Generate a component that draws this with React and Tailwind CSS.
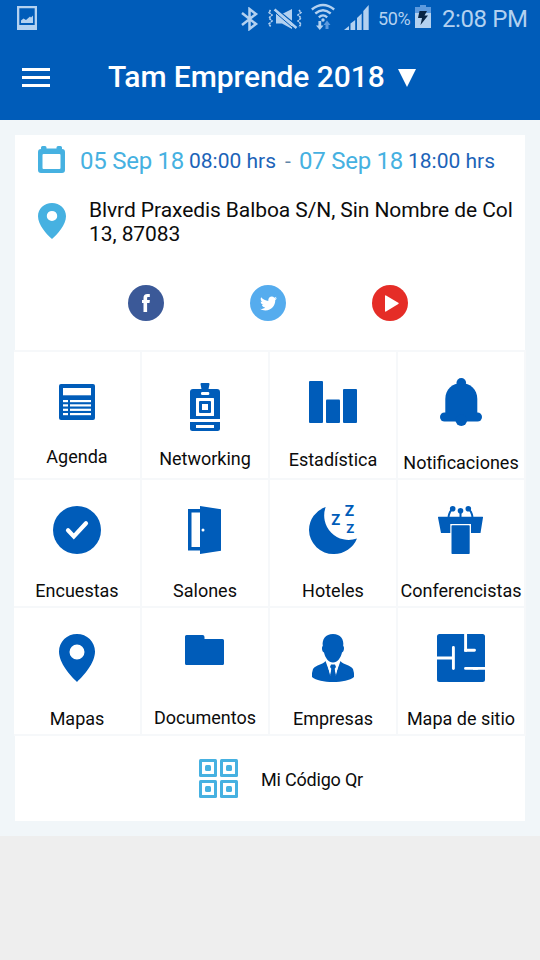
import { FaTwitter } from 'react-icons/fa';

const Pin = ({ className }) => (
  <svg viewBox="0 0 36 48" preserveAspectRatio="none" className={className} fill="currentColor" fillRule="evenodd">
    <path d="M18 0C8 0 0 7.8 0 17.6C0 29 11 41.5 18 48C25 41.5 36 29 36 17.6C36 7.8 28 0 18 0ZM18 10.5A6.7 6.7 0 1 1 18 23.9A6.7 6.7 0 1 1 18 10.5Z" />
  </svg>
);

const AgendaIcon = () => (
  <>
    <rect x="6" width="36" height="36" rx="2" fill="currentColor" />
    <g fill="#fff">
      <rect x="10" y="4" width="28" height="7.3" />
      {[16, 20.3, 24.7, 29].map((y) => (
        <g key={y}>
          <rect x="10" y={y} width="5" height="2.2" />
          <rect x="17" y={y} width="21" height="2.2" />
        </g>
      ))}
    </g>
  </>
);

const BadgeIcon = () => (
  <>
    <g fill="currentColor">
      <path d="M20.5 0H27.5Q28.5 0 28.5 1L27.5 6.5H20.5L19.5 1Q19.5 0 20.5 0Z" />
      <path d="M12 6H36Q39 6 39 9V36H9V9Q9 6 12 6ZM9 39H39V45.5Q39 48 36.5 48H11.5Q9 48 9 45.5Z" />
    </g>
    <rect x="20" y="9" width="8.3" height="3" rx="1.2" fill="#fff" />
    <rect x="15" y="15" width="18" height="18" rx="0.5" fill="#fff" />
    <rect x="18" y="18" width="12" height="12" rx="1" fill="currentColor" />
    <rect x="21" y="21" width="6" height="6" fill="#fff" />
    <rect x="15" y="42" width="18" height="3" fill="#fff" />
  </>
);

const BarsIcon = () => (
  <g fill="currentColor">
    <rect width="14" height="42" rx="1" />
    <rect x="17" y="18.5" width="14" height="23.5" rx="1" />
    <rect x="34" y="8" width="14" height="34" rx="1" />
  </g>
);

const BellIcon = () => (
  <g fill="currentColor">
    <circle cx="24.3" cy="4.8" r="4.8" />
    <path d="M8.3 36V21C8.3 11.5 15.3 5 24.3 5S40.3 11.5 40.3 21V36Z" />
    <rect x="3" y="34.5" width="42" height="9" rx="4.5" />
    <circle cx="24.3" cy="42.2" r="5.8" />
  </g>
);

const CheckIcon = () => (
  <>
    <circle cx="24" cy="24" r="24" fill="currentColor" />
    <path d="M15 24.3L20.8 30.5L33 17.3" fill="none" stroke="#fff" strokeWidth="4.2" strokeLinecap="round" />
  </>
);

const DoorIcon = () => (
  <>
    <path d="M7 3H19V6.5H10.5V41H19V44.5H7Z" fill="currentColor" />
    <path d="M19 0L40 3.3V44.7L19 48Z" fill="currentColor" />
    <circle cx="22" cy="24" r="1.5" fill="#fff" />
  </>
);

const MoonIcon = () => (
  <g fill="currentColor">
    <path d="M16.7 1A24.4 24.4 0 0 0 0 24A24.3 24.3 0 0 0 25 48A24.8 24.8 0 0 0 48 32.5A24.5 24.5 0 0 1 16.7 1Z" />
    <g fontFamily="Roboto, sans-serif" fontWeight="700">
      <text x="22.3" y="19.3" fontSize="14.5" textLength="9" lengthAdjust="spacingAndGlyphs">Z</text>
      <text x="35.8" y="10.2" fontSize="14.5" textLength="9.4" lengthAdjust="spacingAndGlyphs">Z</text>
      <text x="37.3" y="26.8" fontSize="12.5" textLength="8" lengthAdjust="spacingAndGlyphs">Z</text>
    </g>
  </g>
);

const PodiumIcon = () => (
  <>
    <path d="M1.5 10.7H45.5Q46.2 10.7 46 11.5L43.5 27H4L1 11.5Q.9 10.7 1.5 10.7Z" fill="currentColor" />
    <path d="M13.3 28V18H34V28Z" fill="#fff" />
    <rect x="14.5" y="19.2" width="18.2" height="28.8" rx="0.8" fill="currentColor" />
    <g fill="currentColor">
      <circle cx="15.7" cy="2.8" r="2.8" />
      <circle cx="23.5" cy="4.8" r="2.8" />
      <circle cx="31.3" cy="2.8" r="2.8" />
    </g>
    <path d="M15.5 3Q12.5 5 11.5 11M23.5 5V11M31.5 3Q34.5 5 35.5 11" fill="none" stroke="currentColor" strokeWidth="2" />
  </>
);

const MapPinIcon = () => (
  <path
    fill="currentColor"
    fillRule="evenodd"
    d="M24 0C14 0 6 7.8 6 17.6C6 29 17 41.5 24 48C31 41.5 42 29 42 17.6C42 7.8 34 0 24 0ZM24 10.5A7.5 7.5 0 1 1 24 25.5A7.5 7.5 0 1 1 24 10.5Z"
  />
);

const FolderIcon = () => (
  <path d="M5.5 0H21.5Q23.5 0 23.5 2V4H41.5Q43 4 43 5.5V28.5Q43 30 41.5 30H5.5Q4 30 4 28.5V1.5Q4 0 5.5 0Z" fill="currentColor" />
);

const BusinessIcon = () => (
  <g fill="currentColor">
    <path d="M24 0C16.5 0 12.8 5.5 13.8 12C12.3 13 13 18 15 18.5C16 23.5 19.5 28.5 24 28.5S32 23.5 33 18.5C35 18 35.7 13 34.2 12C35.2 5.5 31.5 0 24 0Z" />
    <path d="M16.5 27L22 42L21.5 33H26.5L26 42L31.5 27C34 31 41 30.5 44 35Q45.2 38 45 43C41 46.5 33 48 24 48S7 46.5 3 43Q2.8 38 4 35C7 30.5 14 31 16.5 27Z" />
    <path d="M18 28.5L23 33L21 41Z M30 28.5L25 33L27 41Z" fill="#fff" />
    <path d="M22 30.5H26L27 33L25.5 35L26.8 41L24 44L21.2 41L22.5 35L21 33Z" />
  </g>
);

const SiteMapIcon = () => (
  <>
    <rect width="48" height="48" rx="2.5" fill="currentColor" />
    <g fill="none" stroke="#fff" strokeWidth="2.9">
      <path d="M16.4 13.5V34.5M28.6 16.3H37.5M28.5 34.4H40" strokeLinecap="round" />
      <path d="M0 24H16M28.6 0V17.7M36 34.4H48" />
    </g>
  </>
);

const menu = [
  { label: 'Agenda', icon: AgendaIcon, iconPos: 'mt-8', labelPos: 'mt-[14px]' },
  { label: 'Networking', icon: BadgeIcon, iconPos: 'mt-[31px]', labelPos: 'mt-[17px]' },
  { label: 'Estadística', icon: BarsIcon, iconPos: 'mt-[29px]', labelPos: 'mt-5' },
  { label: 'Notificaciones', icon: BellIcon, iconPos: 'mt-[26px]', labelPos: 'mt-[26px]' },
  { label: 'Encuestas', icon: CheckIcon, iconPos: 'mt-[26px]', labelPos: 'mt-[26px]' },
  { label: 'Salones', icon: DoorIcon, iconPos: 'mt-[26px]', labelPos: 'mt-[26px]' },
  { label: 'Hoteles', icon: MoonIcon, iconPos: 'mt-[26px]', labelPos: 'mt-[26px]' },
  { label: 'Conferencistas', icon: PodiumIcon, iconPos: 'mt-[26px]', labelPos: 'mt-[26px]' },
  { label: 'Mapas', icon: MapPinIcon, iconPos: 'mt-[26px]', labelPos: 'mt-[26px]' },
  { label: 'Documentos', icon: FolderIcon, iconPos: 'mt-[27px]', labelPos: 'mt-6' },
  { label: 'Empresas', icon: BusinessIcon, iconPos: 'mt-[26px]', labelPos: 'mt-[26px]' },
  { label: 'Mapa de sitio', icon: SiteMapIcon, iconPos: 'mt-[26px]', labelPos: 'mt-[26px]' },
];

const MenuTile = ({ label, icon: Icon, iconPos, labelPos }) => (
  <button className="h-[126px] bg-white flex flex-col items-center overflow-hidden">
    <svg width="48" height="48" viewBox="0 0 48 48" className={`shrink-0 overflow-visible text-[#005cb9] ${iconPos}`}>
      <Icon />
    </svg>
    <span className={`text-lg leading-[22px] whitespace-nowrap text-[#0c0c0c] ${labelPos}`}>{label}</span>
  </button>
);

const StatusBar = () => (
  <div className="h-9 flex items-start text-[#b3d1f0]">
    <svg width="20" height="24" viewBox="0 0 20 24" className="ml-[17px] mt-1.5" fill="currentColor">
      <path fillRule="evenodd" d="M0 0H20V24H0ZM2.3 2.3V19H17.7V2.3Z" />
      <path d="M4 17V14.5L6.5 12.5L9 14L13 10.5L14 11.5L16 9.5V17Z" />
    </svg>

    {/* Bluetooth */}
    <svg width="18" height="24" viewBox="0 0 18 24" className="ml-[204px] mt-[7px]" fill="none" stroke="currentColor" strokeWidth="2.5">
      <path d="M1 6L15 17L8.5 22V2L15 7L1 18" />
    </svg>

    {/* Vibrate / muted */}
    <svg width="34" height="22" viewBox="0 0 34 22" className="ml-[9px] mt-2" fill="none" stroke="currentColor">
      <path d="M2.5 2L1 4.5L4 7L1 10L4 13L1 16L3 19M31 2L33 4.5L30 7L33 10L30 13L33 16L31 19" strokeWidth="1.6" strokeDasharray="2.2 .7" />
      <path d="M8 5.5V15.5H14L24 21V1L15 5.5Z" fill="currentColor" stroke="none" />
      <path d="M7 0L30 18.5" stroke="#005cb9" strokeWidth="1.5" />
      <path d="M6.5 1.5L28.5 20" strokeWidth="2.6" />
      <path d="M6 3.5L27.5 22" stroke="#005cb9" strokeWidth="1" />
    </svg>

    {/* Wifi */}
    <svg width="24" height="27" viewBox="0 0 24 27" className="ml-[9px] mt-[3px]" fill="none" stroke="currentColor" strokeWidth="2.3">
      <path d="M.8 6.5Q12-2.5 23.2 6.5M4.3 10.5Q12 4 19.7 10.5M7.8 14.3Q12 10.5 16.2 14.3" />
      <circle cx="12" cy="17" r="1.7" fill="currentColor" stroke="none" />
      <path d="M7.4 18H10.2V22.5H12.5L8.8 27L5 22.5H7.4Z" fill="currentColor" stroke="none" />
      <path d="M14.5 26V22H12.5L16 17.5L19.5 22H17.5V26Z" fill="#5d9ade" stroke="none" />
    </svg>

    {/* Signal */}
    <svg width="26" height="25" viewBox="0 0 26 25" className="ml-[9px] mt-[5px]" fill="currentColor">
      <path d="M0 25L5 21V25ZM6.5 18.5L11.2 15V25H6.5ZM13 13L17.7 8.5V25H13ZM19.3 6L24.7 0V25H19.3Z" />
    </svg>

    <span className="ml-2 mt-2 w-[34px] text-lg leading-[22px] tracking-[-0.4px]">50%</span>

    {/* Battery */}
    <svg width="16" height="23" viewBox="0 0 16 23" className="ml-[3px] mt-[5px]">
      <path d="M5 0H11V2H16V9H0V2H5Z" fill="#5d9ade" />
      <path d="M0 8H16V23H0Z" fill="currentColor" />
      <path d="M4.5 6H12L9.5 10.5H13L5.5 20L7 13H3Z" fill="#082545" />
    </svg>

    <span className="ml-[11px] mt-[5px] text-2xl leading-7 tracking-[-0.4px] whitespace-nowrap">2:08 PM</span>
  </div>
);

const Header = () => (
  <header className="h-[120px] bg-[#005cb9]">
    <StatusBar />
    <div className="h-[84px] flex items-start text-white">
      <button className="ml-[22px] mt-8 w-7 flex flex-col gap-[5px]">
        <span className="h-[3px] w-full bg-white" />
        <span className="h-[3px] w-full bg-white" />
        <span className="h-[3px] w-full bg-white" />
      </button>
      <h1 className="ml-[58px] mt-[23px] text-[30px] leading-9 font-medium tracking-[-0.06px] whitespace-nowrap">Tam Emprende 2018</h1>
      <svg width="18" height="18" viewBox="0 0 18 18" className="ml-[13px] mt-[33px]" fill="#fff">
        <path d="M0 0H18L9 18Z" />
      </svg>
    </div>
  </header>
);

const EventInfo = () => (
  <section className="mx-px h-[215px] bg-white">
    <div className="h-[38px] flex items-start pt-[11px] pl-[23px] whitespace-nowrap">
      <svg width="27" height="27" viewBox="0 0 27 27" className="text-[#46b1e1]" fill="currentColor">
        <path fillRule="evenodd" d="M3 3V1.5Q3 0 4.5 0H7Q8.5 0 8.5 1.5V2.5H18.5V1.5Q18.5 0 20 0H22.5Q24 0 24 1.5V3Q27 3 27 6V24Q27 27 24 27H3Q0 27 0 24V6Q0 3 3 3ZM5.5 8Q4.5 8 4.5 9V22Q4.5 23 5.5 23H21.5Q22.5 23 22.5 22V9Q22.5 8 21.5 8Z" />
      </svg>
      <div className="ml-[15px] mt-px flex items-start text-[#1c63b8]">
        <span className="w-[109px] text-2xl leading-7 tracking-[-0.25px] text-[#46b1e1]">05 Sep 18</span>
        <span className="w-24 text-[21px] leading-7">08:00 hrs</span>
        <span className="w-[14px] text-[21px] leading-7 text-[#5f86a8]">-</span>
        <span className="w-[109px] text-2xl leading-7 tracking-[-0.25px] text-[#46b1e1]">07 Sep 18</span>
        <span className="text-[21px] leading-7">18:00 hrs</span>
      </div>
    </div>

    <div className="mt-6 flex items-start pl-[23px]">
      <Pin className="mt-[6px] h-9 w-7 text-[#46b1e1]" />
      <p className="mt-px ml-[23px] text-[21px] leading-6 tracking-[-0.08px] text-[#0c0c0c] whitespace-nowrap">
        Blvrd Praxedis Balboa S/N, Sin Nombre de Col
        <br />
        13, 87083
      </p>
    </div>

    {/* Social links */}
    <div className="mt-[39px] pl-[113px] flex gap-[86px] text-white">
      <div className="size-9 rounded-full bg-[#3b5998] flex items-center justify-center">
        <svg width="8" height="18" viewBox="0 0 8 18" fill="currentColor">
          <path d="M1.5 18V9H0V6H1.5V4C1.5 1.3 2.8 0 5.3 0H7.8V3H6.2C5.4 3 5.1 3.3 5.1 4.1V6H7.9L7.5 9H5.1V18Z" />
        </svg>
      </div>
      <div className="size-9 rounded-full bg-[#55acee] flex items-center justify-center">
        <FaTwitter size={17} />
      </div>
      <div className="size-9 rounded-full bg-[#e52d27] flex items-center justify-center">
        <svg width="14" height="17" viewBox="0 0 14 17" className="ml-[3px]" fill="#fff">
          <path d="M0 1Q0 0 1 .5L13.3 7.7Q14.2 8.3 13.3 9L1 16.5Q0 17 0 16Z" />
        </svg>
      </div>
    </div>
  </section>
);

const QrIcon = () => (
  <svg width="39" height="39" viewBox="0 0 39 39" fill="#46b1e1">
    {[[0, 0], [21, 0], [0, 21], [21, 21]].map(([x, y]) => (
      <g key={`${x}-${y}`}>
        <rect x={x} y={y} width="18" height="18" rx="1.5" />
        <rect x={x + 3} y={y + 3} width="12" height="12" fill="#fff" />
        <rect x={x + 6} y={y + 6} width="6" height="6" rx="1.5" />
      </g>
    ))}
  </svg>
);

const App = () => {
  return (
    <div className="h-[960px] w-[540px] overflow-hidden bg-[#eeeeee] font-['Roboto',sans-serif]">
      <Header />
      <main className="h-[716px] bg-[#f1f6f9] px-[14px] pt-[15px]">
        <EventInfo />
        <div className="grid grid-cols-[repeat(4,126px)] gap-0.5 bg-[#f6f8fa] py-0.5">
          {menu.map((item) => (
            <MenuTile key={item.label} {...item} />
          ))}
        </div>
        <div className="mx-px h-[85px] bg-white flex items-center pl-[184px]">
          <QrIcon />
          <span className="ml-[23px] mt-[3px] text-lg leading-[22px] tracking-[-0.2px] text-[#0c0c0c]">Mi Código Qr</span>
        </div>
      </main>
    </div>
  );
};

export default App;
